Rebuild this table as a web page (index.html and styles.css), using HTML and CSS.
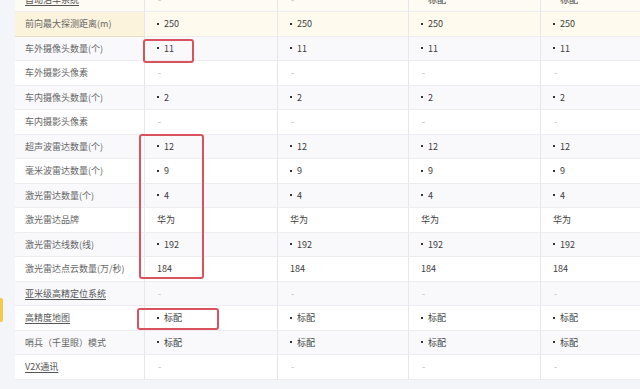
FILE: index.html
```html
<!DOCTYPE html>
<html lang="zh">
<head>
<meta charset="utf-8">
<link rel="stylesheet" href="styles.css">
</head>
<body>
<div class="page">
  <div class="rail"><div class="tab"></div></div>
  <div class="table">
    <div class="row cream"><div class="lbl link">自动泊车系统</div><div class="c dash">-</div><div class="c dash">-</div><div class="c"><span class="dot"></span>标配</div><div class="c"><span class="dot"></span>标配</div></div>
    <div class="row hover"><div class="lbl">前向最大探测距离(m)</div><div class="c"><span class="dot"></span>250</div><div class="c"><span class="dot"></span>250</div><div class="c"><span class="dot"></span>250</div><div class="c"><span class="dot"></span>250</div></div>
    <div class="row alt"><div class="lbl">车外摄像头数量(个)</div><div class="c"><span class="dot"></span>11</div><div class="c"><span class="dot"></span>11</div><div class="c"><span class="dot"></span>11</div><div class="c"><span class="dot"></span>11</div></div>
    <div class="row"><div class="lbl">车外摄影头像素</div><div class="c dash">-</div><div class="c dash">-</div><div class="c dash">-</div><div class="c dash">-</div></div>
    <div class="row alt"><div class="lbl">车内摄像头数量(个)</div><div class="c"><span class="dot"></span>2</div><div class="c"><span class="dot"></span>2</div><div class="c"><span class="dot"></span>2</div><div class="c"><span class="dot"></span>2</div></div>
    <div class="row"><div class="lbl">车内摄影头像素</div><div class="c dash">-</div><div class="c dash">-</div><div class="c dash">-</div><div class="c dash">-</div></div>
    <div class="row alt"><div class="lbl">超声波雷达数量(个)</div><div class="c"><span class="dot"></span>12</div><div class="c"><span class="dot"></span>12</div><div class="c"><span class="dot"></span>12</div><div class="c"><span class="dot"></span>12</div></div>
    <div class="row"><div class="lbl">毫米波雷达数量(个)</div><div class="c"><span class="dot"></span>9</div><div class="c"><span class="dot"></span>9</div><div class="c"><span class="dot"></span>9</div><div class="c"><span class="dot"></span>9</div></div>
    <div class="row alt"><div class="lbl">激光雷达数量(个)</div><div class="c"><span class="dot"></span>4</div><div class="c"><span class="dot"></span>4</div><div class="c"><span class="dot"></span>4</div><div class="c"><span class="dot"></span>4</div></div>
    <div class="row"><div class="lbl">激光雷达品牌</div><div class="c">华为</div><div class="c">华为</div><div class="c">华为</div><div class="c">华为</div></div>
    <div class="row alt"><div class="lbl">激光雷达线数(线)</div><div class="c"><span class="dot"></span>192</div><div class="c"><span class="dot"></span>192</div><div class="c"><span class="dot"></span>192</div><div class="c"><span class="dot"></span>192</div></div>
    <div class="row"><div class="lbl">激光雷达点云数量(万/秒)</div><div class="c">184</div><div class="c">184</div><div class="c">184</div><div class="c">184</div></div>
    <div class="row alt"><div class="lbl link">亚米级高精定位系统</div><div class="c dash">-</div><div class="c dash">-</div><div class="c dash">-</div><div class="c dash">-</div></div>
    <div class="row"><div class="lbl link">高精度地图</div><div class="c"><span class="dot"></span>标配</div><div class="c"><span class="dot"></span>标配</div><div class="c"><span class="dot"></span>标配</div><div class="c"><span class="dot"></span>标配</div></div>
    <div class="row alt"><div class="lbl">哨兵（千里眼）模式</div><div class="c"><span class="dot"></span>标配</div><div class="c"><span class="dot"></span>标配</div><div class="c"><span class="dot"></span>标配</div><div class="c"><span class="dot"></span>标配</div></div>
    <div class="row"><div class="lbl link">V2X通讯</div><div class="c dash">-</div><div class="c dash">-</div><div class="c dash">-</div><div class="c dash">-</div></div>
  </div>
</div>
<div class="mark m1"></div>
<div class="mark m2"></div>
<div class="mark m3"></div>
</body>
</html>
```
FILE: styles.css
```css
html, body {
  margin: 0;
  padding: 0;
  background: #f4f5f9;
  overflow: hidden;
  width: 640px;
  height: 389px;
}
body {
  font-family: "Noto Sans CJK SC", "Noto Sans", sans-serif;
  font-size: 9px;
  position: relative;
}
.page {
  display: flex;
  align-items: flex-start;
}
.rail {
  width: 15px;
  flex: none;
  padding-top: 298px;
}
.tab {
  width: 3px;
  height: 24px;
  background: #f5c84a;
  border-radius: 0 2px 2px 0;
}
.table {
  flex: none;
  margin-top: -12.5px;
  background: #fff;
}
.row {
  display: grid;
  grid-template-columns: 130px 133px 131px 132px 132px;
  height: 24.5px;
  background: #fff;
}
.row.alt { background: #f9f9fc; }
.row.cream { background: #fdfbf3; }
.row.hover { background: #fefaee; }
.row.hover .lbl { background: #fcf3dc; border-bottom-color: #e6dcc4; }
.lbl, .c {
  display: flex;
  align-items: center;
  border-bottom: 1px solid #ececf1;
  border-right: 1px solid #e6e6eb;
  box-sizing: border-box;
  white-space: nowrap;
  overflow: hidden;
}
.lbl {
  padding-left: 10px;
  color: #666;
}
.lbl.link {
  color: #555;
  text-decoration: underline;
  text-underline-offset: 2px;
}
.c {
  padding-left: 12px;
  color: #3c3c3c;
}
.c.dash {
  color: #b8b8b8;
  padding-left: 13px;
}
.dot {
  width: 2px;
  height: 2px;
  background: #333;
  margin-right: 5px;
  flex: none;
}
.mark {
  position: absolute;
  border: 2px solid #d9525e;
  border-radius: 3px;
  box-sizing: border-box;
}
.m1 { left: 143px; top: 39px; width: 51px; height: 24px; }
.m2 { left: 139px; top: 134px; width: 65px; height: 145px; }
.m3 { left: 137px; top: 308px; width: 82px; height: 22px; }
```
